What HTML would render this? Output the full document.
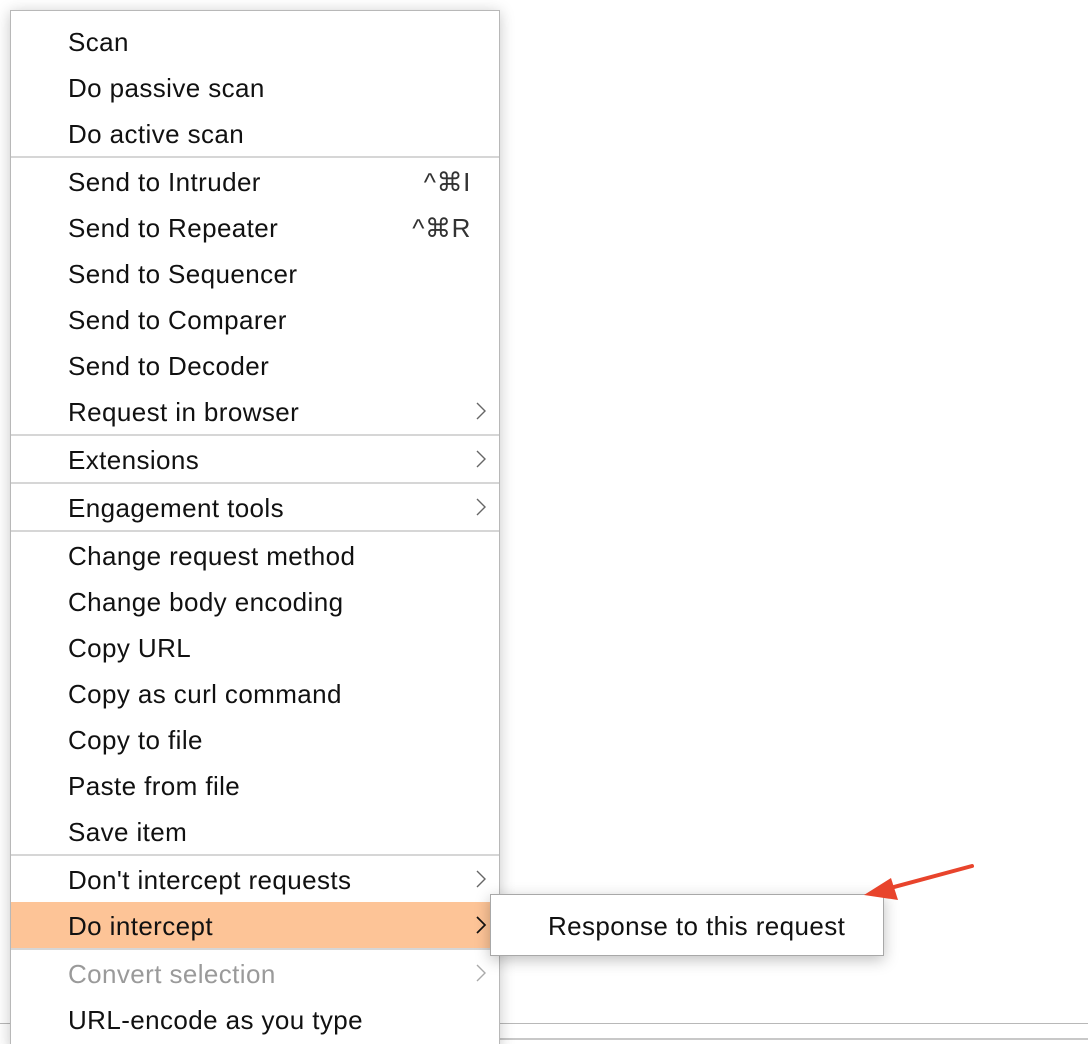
<!DOCTYPE html>
<html><head><meta charset="utf-8"><style>
html,body{margin:0;padding:0;background:#fff;width:1088px;height:1044px;overflow:hidden;position:relative;font-family:"Liberation Sans",Arial,sans-serif;}
.menu{position:absolute;left:10px;top:10px;width:488px;height:1040px;background:#fff;border:1px solid #b8b8b8;border-bottom:none;box-shadow:0 2px 14px rgba(0,0,0,.22);}
.it{position:absolute;left:57px;height:46px;line-height:48px;font-size:26px;letter-spacing:0.4px;color:#111;white-space:nowrap;}
.sep{position:absolute;left:0;width:488px;height:2px;background:#d6d6d6;}
.sc{position:absolute;right:28px;height:46px;line-height:48px;font-size:26px;letter-spacing:0.6px;color:#333;}
.ch{position:absolute;left:464px;width:12px;height:20px;}
.hl{position:absolute;left:0;width:488px;top:891px;height:47px;background:#fdc497;}
.sub{position:absolute;left:490px;top:894px;width:392px;height:60px;background:#fff;border:1px solid #a8a8a8;box-shadow:0 4px 14px rgba(0,0,0,.25);}
.sub span{position:absolute;left:57px;top:0;line-height:62px;font-size:26px;letter-spacing:0.4px;color:#111;white-space:nowrap;}
.bl{position:absolute;height:1px;background:#b8b8b8;}
</style></head><body>
<div class="bl" style="left:0;top:1023px;width:12px"></div>
<div class="bl" style="left:498px;top:1023px;width:590px"></div>
<div class="bl" style="left:498px;top:1038px;width:590px;height:2px;background:#c8c8c8"></div>
<div class="menu">
<div class="hl"></div>
<div class="it" style="top:7px">Scan</div>
<div class="it" style="top:53px">Do passive scan</div>
<div class="it" style="top:99px">Do active scan</div>
<div class="sep" style="top:145px"></div>
<div class="it" style="top:147px">Send to Intruder</div><div class="sc" style="top:147px">^⌘I</div>
<div class="it" style="top:193px">Send to Repeater</div><div class="sc" style="top:193px">^⌘R</div>
<div class="it" style="top:239px">Send to Sequencer</div>
<div class="it" style="top:285px">Send to Comparer</div>
<div class="it" style="top:331px">Send to Decoder</div>
<div class="it" style="top:377px">Request in browser</div>
<div class="sep" style="top:423px"></div>
<div class="it" style="top:425px">Extensions</div>
<div class="sep" style="top:471px"></div>
<div class="it" style="top:473px">Engagement tools</div>
<div class="sep" style="top:519px"></div>
<div class="it" style="top:521px">Change request method</div>
<div class="it" style="top:567px">Change body encoding</div>
<div class="it" style="top:613px">Copy URL</div>
<div class="it" style="top:659px">Copy as curl command</div>
<div class="it" style="top:705px">Copy to file</div>
<div class="it" style="top:751px">Paste from file</div>
<div class="it" style="top:797px">Save item</div>
<div class="sep" style="top:843px"></div>
<div class="it" style="top:845px">Don't intercept requests</div>
<div class="it" style="top:891px">Do intercept</div>
<div class="sep" style="top:937px"></div>
<div class="it" style="top:939px;color:#9a9a9a">Convert selection</div>
<div class="it" style="top:985px">URL-encode as you type</div>
<svg class="ch" style="top:390px" viewBox="0 0 12 20"><path d="M2 2 L10 10 L2 18" fill="none" stroke="#666" stroke-width="1.4"/></svg>
<svg class="ch" style="top:438px" viewBox="0 0 12 20"><path d="M2 2 L10 10 L2 18" fill="none" stroke="#666" stroke-width="1.4"/></svg>
<svg class="ch" style="top:486px" viewBox="0 0 12 20"><path d="M2 2 L10 10 L2 18" fill="none" stroke="#666" stroke-width="1.4"/></svg>
<svg class="ch" style="top:858px" viewBox="0 0 12 20"><path d="M2 2 L10 10 L2 18" fill="none" stroke="#666" stroke-width="1.4"/></svg>
<svg class="ch" style="top:904px" viewBox="0 0 12 20"><path d="M2 2 L10 10 L2 18" fill="none" stroke="#111" stroke-width="1.7"/></svg>
<svg class="ch" style="top:952px" viewBox="0 0 12 20"><path d="M2 2 L10 10 L2 18" fill="none" stroke="#aaa" stroke-width="1.4"/></svg>
</div>
<div class="sub"><span>Response to this request</span></div>
<svg style="position:absolute;left:855px;top:860px" width="125" height="45" viewBox="0 0 125 45">
<path d="M117 6 L28 30" stroke="#e8442c" stroke-width="4" stroke-linecap="round"/>
<polygon points="9,35 36,18 43,40" fill="#e8442c"/>
</svg>
</body></html>
